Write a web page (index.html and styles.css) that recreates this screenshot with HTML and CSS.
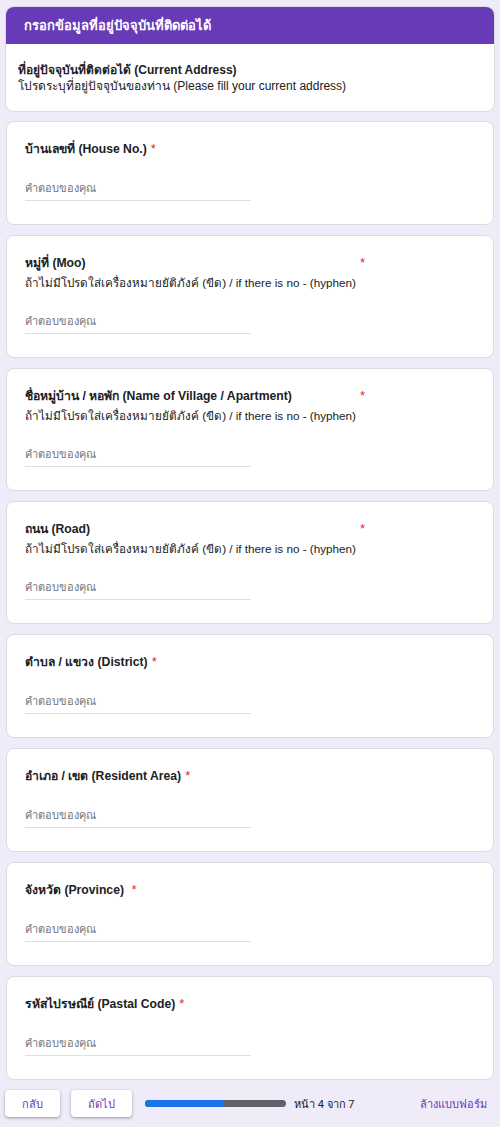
FILE: index.html
```html
<!DOCTYPE html>
<html lang="th">
<head>
<meta charset="utf-8">
<title>กรอกข้อมูลที่อยู่ปัจจุบันที่ติดต่อได้</title>
<link rel="stylesheet" href="styles.css">
</head>
<body>
<main class="form">
  <section class="card header-card">
    <div class="header-band">กรอกข้อมูลที่อยู่ปัจจุบันที่ติดต่อได้</div>
    <div class="header-body">
      <div class="header-title">ที่อยู่ปัจจุบันที่ติดต่อได้ (Current Address)</div>
      <div class="header-desc">โปรดระบุที่อยู่ปัจจุบันของท่าน (Please fill your current address)</div>
    </div>
  </section>

  <section class="card">
    <div class="q-head"><div class="q-text"><div class="q-title">บ้านเลขที่ (House No.)</div></div><span class="req">*</span></div>
    <div class="answer">คำตอบของคุณ</div>
  </section>

  <section class="card">
    <div class="q-head"><div class="q-text"><div class="q-title">หมู่ที่ (Moo)</div><div class="q-desc">ถ้าไม่มีโปรดใส่เครื่องหมายยัติภังค์ (ขีด) / if there is no - (hyphen)</div></div><span class="req">*</span></div>
    <div class="answer">คำตอบของคุณ</div>
  </section>

  <section class="card">
    <div class="q-head"><div class="q-text"><div class="q-title">ชื่อหมู่บ้าน / หอพัก (Name of Village / Apartment)</div><div class="q-desc">ถ้าไม่มีโปรดใส่เครื่องหมายยัติภังค์ (ขีด) / if there is no - (hyphen)</div></div><span class="req">*</span></div>
    <div class="answer">คำตอบของคุณ</div>
  </section>

  <section class="card">
    <div class="q-head"><div class="q-text"><div class="q-title">ถนน (Road)</div><div class="q-desc">ถ้าไม่มีโปรดใส่เครื่องหมายยัติภังค์ (ขีด) / if there is no - (hyphen)</div></div><span class="req">*</span></div>
    <div class="answer">คำตอบของคุณ</div>
  </section>

  <section class="card">
    <div class="q-head"><div class="q-text"><div class="q-title">ตำบล / แขวง (District)</div></div><span class="req">*</span></div>
    <div class="answer">คำตอบของคุณ</div>
  </section>

  <section class="card">
    <div class="q-head"><div class="q-text"><div class="q-title">อำเภอ / เขต (Resident Area)</div></div><span class="req">*</span></div>
    <div class="answer">คำตอบของคุณ</div>
  </section>

  <section class="card">
    <div class="q-head"><div class="q-text"><div class="q-title">จังหวัด (Province)&nbsp;</div></div><span class="req">*</span></div>
    <div class="answer">คำตอบของคุณ</div>
  </section>

  <section class="card">
    <div class="q-head"><div class="q-text"><div class="q-title">รหัสไปรษณีย์ (Pastal Code)</div></div><span class="req">*</span></div>
    <div class="answer">คำตอบของคุณ</div>
  </section>

  <nav class="footer">
    <button class="btn btn-back">กลับ</button>
    <button class="btn btn-next">ถัดไป</button>
    <div class="progress"><div class="progress-fill"></div></div>
    <span class="page-count">หน้า 4 จาก 7</span>
    <a class="clear" href="#">ล้างแบบฟอร์ม</a>
  </nav>
</main>
</body>
</html>
```

FILE: styles.css
```css
* { box-sizing: border-box; }
html, body { margin: 0; padding: 0; }
body {
  background: #f0ebf8;
  font-family: Roboto, "Liberation Sans", "Noto Sans", sans-serif;
  color: #202124;
}
.form {
  display: flex;
  flex-direction: column;
  gap: 10px;
  padding: 7px 6px 8px 6px;
}
.card {
  background: #fff;
  border: 1px solid #dadce0;
  border-radius: 8px;
  padding: 17px 18px 23px 18px;
}
.header-card {
  padding: 0;
  overflow: hidden;
  border: none;
  box-shadow: 0 0 0 1px #dadce0;
}
.header-band {
  background: #673ab7;
  color: #fff;
  font-weight: 700;
  font-size: 13px;
  line-height: 37px;
  height: 37px;
  padding-left: 18px;
}
.header-body {
  padding: 18px 12px 17px 12px;
  font-family: "Liberation Sans", Arial, sans-serif;
}
.header-title {
  font-size: 12px;
  font-weight: 700;
  line-height: 16px;
}
.header-desc {
  font-size: 12px;
  line-height: 16px;
}
.q-head {
  display: flex;
  align-items: flex-start;
  gap: 4px;
  font-family: "Liberation Sans", Arial, sans-serif;
}
.q-title {
  font-size: 12.2px;
  font-weight: 700;
  line-height: 20px;
}
.q-desc {
  font-size: 11.7px;
  line-height: 19px;
}
.req {
  color: #d93025;
  font-size: 13px;
  line-height: 20px;
}
.answer {
  margin-top: 20px;
  width: 226px;
  height: 22px;
  border-bottom: 1px solid #e0e0e0;
  font-size: 11px;
  line-height: 20px;
  color: #70757a;
}
.footer {
  display: flex;
  align-items: center;
  height: 27px;
  margin-left: -1px;
}
.btn {
  height: 27px;
  border: none;
  background: #fff;
  border-radius: 4px;
  box-shadow: 0 1px 2px rgba(60,64,67,0.3), 0 1px 3px 1px rgba(60,64,67,0.15);
  color: #673ab7;
  font-family: inherit;
  font-size: 11px;
  padding: 0;
}
.btn-back { width: 55px; }
.btn-next { width: 61px; margin-left: 11px; }
.progress {
  margin-left: 13px;
  width: 141px;
  height: 7px;
  border-radius: 4px;
  background: #5f6368;
  overflow: hidden;
}
.progress-fill {
  width: 56%;
  height: 100%;
  background: #1a73e8;
}
.page-count {
  margin-left: 8px;
  font-size: 11px;
  color: #202124;
}
.clear {
  margin-left: auto;
  margin-right: 7px;
  font-size: 11px;
  color: #673ab7;
  text-decoration: none;
}
```
